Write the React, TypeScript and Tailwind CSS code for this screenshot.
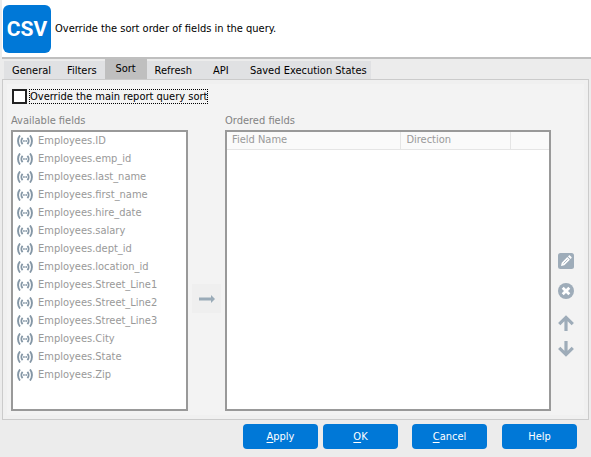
import { useState } from 'react';

const TABS = ['General', 'Filters', 'Sort', 'Refresh', 'API', 'Saved Execution States'];

const FIELDS = [
  'Employees.ID',
  'Employees.emp_id',
  'Employees.last_name',
  'Employees.first_name',
  'Employees.hire_date',
  'Employees.salary',
  'Employees.dept_id',
  'Employees.location_id',
  'Employees.Street_Line1',
  'Employees.Street_Line2',
  'Employees.Street_Line3',
  'Employees.City',
  'Employees.State',
  'Employees.Zip',
];

function CsvLogo() {
  return (
    <div
      className="flex size-12 shrink-0 items-center justify-center rounded-md bg-[#0078d7] font-['Roboto',sans-serif] text-[21px] leading-6 font-bold text-white"
      aria-hidden
    >
      CSV
    </div>
  );
}

function FieldIcon() {
  return (
    <svg
      className="h-3 w-4 shrink-0"
      viewBox="0 0 16 12"
      fill="none"
      stroke="#8496a5"
      strokeWidth="1.9"
      aria-hidden
    >
      <path d="M3 .5C.4 3.5.4 8.500 3 11.500M13 .5c2.600 3 2.600 8 0 11" />
      <path d="M5.600 2.800c-1.600 1.800-1.600 4.600 0 6.400M10.400 2.800c1.600 1.800 1.600 4.600 0 6.400" />
      <path d="M6.300 6h1.300M8.500 6h1.300" strokeWidth="2" />
    </svg>
  );
}

function ArrowRightIcon() {
  return (
    <svg className="h-2 w-4" viewBox="0 0 16 8" fill="#9aabb8" aria-hidden>
      <path d="M0 2.600h12V0l4 4-4 4V5.400H0z" />
    </svg>
  );
}

function EditIcon() {
  return (
    <svg className="size-4" viewBox="0 0 16 16" aria-hidden>
      <rect width="16" height="16" rx="2.500" fill="#9eacb9" />
      <path d="M3 13l.7-3.300 5.600-5.600 2.600 2.600-5.600 5.600zM10 3.400l.9-.9c.3-.3.700-.3 1 0l1.600 1.600c.3.3.3.700 0 1l-.9.9z" fill="#fff" />
      <path d="M5.500 10.500l4.200-4.200" stroke="#9eacb9" strokeWidth=".8" />
    </svg>
  );
}

function RemoveIcon() {
  return (
    <svg className="size-4" viewBox="0 0 16 16" aria-hidden>
      <circle cx="8" cy="8" r="8" fill="#9eacb9" />
      <path d="M4.700 4.700l6.600 6.600M11.300 4.700l-6.600 6.600" stroke="#fff" strokeWidth="2.800" />
    </svg>
  );
}

function ArrowUpIcon({ flipped = false }: { flipped?: boolean }) {
  return (
    <svg
      className={flipped ? 'size-4 rotate-180' : 'size-4'}
      viewBox="0 0 16 16"
      fill="none"
      stroke="#9eacb9"
      strokeWidth="3.200"
      aria-hidden
    >
      <path d="M8 16V2.500M1.200 9.200L8 2.400l6.800 6.800" />
    </svg>
  );
}

function FooterButton({ label, accessKey }: { label: string; accessKey?: string }) {
  return (
    <button
      type="button"
      accessKey={accessKey?.toLowerCase()}
      className="h-[25px] w-[75px] rounded bg-[#0078d7] pt-px text-white hover:bg-[#0069bd]"
    >
      {accessKey ? (
        <>
          <span className="underline underline-offset-2">{accessKey}</span>
          {label.slice(1)}
        </>
      ) : (
        label
      )}
    </button>
  );
}

export default function App() {
  const [tab, setTab] = useState('Sort');
  const [override, setOverride] = useState(false);

  return (
    <div className="flex min-h-screen flex-col bg-[#ececec] pl-[2px] font-['DejaVu_Sans_Condensed','DejaVu_Sans',sans-serif] text-[11px] leading-[18px] text-black">
      <header className="flex h-[59px] items-center gap-1 border-b-2 border-[#bfbfbf] bg-white pl-px">
        <CsvLogo />
        <p>Override the sort order of fields in the query.</p>
      </header>

      <nav className="flex h-5 items-end pl-[2px]" role="tablist">
        {TABS.map((name) => (
          <button
            key={name}
            type="button"
            role="tab"
            aria-selected={name === tab}
            onClick={() => setTab(name)}
            className={
              name === tab
                ? 'h-5 min-w-[42px] bg-[#bfbfbf] px-2 last:pr-1'
                : 'h-[18px] min-w-[42px] bg-[#e0e1e3] px-2 pt-px last:pr-1'
            }
          >
            {name}
          </button>
        ))}
      </nav>

      <main className="mr-[2px] flex flex-1 flex-col border border-[#cbcbcb] bg-[#f0f0f0] p-1">
        <div className="flex flex-1 flex-col bg-[#f3f3f3] px-1 pt-[2px] pb-1">
          <label className="flex h-5 items-center gap-[2px] self-start pl-px">
            <input
              type="checkbox"
              checked={override}
              onChange={(e) => setOverride(e.target.checked)}
              className="size-[15px] appearance-none border-2 border-[#222] bg-white checked:bg-[#0078d7]"
            />
            <span className="h-[15px] border border-dotted border-black leading-[14px]">
              Override the main report query sort
            </span>
          </label>

          <div className="mt-[6px] flex flex-1">
            <section className="flex w-[177px] flex-col text-[#999]">
              <h2 className="h-[18px] text-[#838383]">Available fields</h2>
              <ul className="flex-1 border-2 border-[#999] bg-white pl-1">
                {FIELDS.map((field) => (
                  <li key={field} className="flex h-[18px] items-center gap-[5px]">
                    <FieldIcon />
                    {field}
                  </li>
                ))}
              </ul>
            </section>

            <div className="flex items-center px-1 pt-[74px]">
              <button
                type="button"
                disabled
                aria-label="Add field"
                className="flex size-[29px] items-center justify-center bg-[#efefef]"
              >
                <ArrowRightIcon />
              </button>
            </div>

            <section className="flex flex-1 flex-col">
              <h2 className="h-[18px] text-[#838383]">Ordered fields</h2>
              <div className="flex-1 border-2 border-[#999] bg-white">
                <table className="w-full table-fixed border-collapse text-left text-[#999]">
                  <thead>
                    <tr className="h-[17px] border-b border-[#e5e5e5] bg-[#fafafa] leading-4">
                      <th className="w-[54%] border-r border-[#e5e5e5] pl-[5px] font-normal">Field Name</th>
                      <th className="w-[34%] border-r border-[#e5e5e5] pl-[5px] font-normal">Direction</th>
                      <th aria-label="Options" />
                    </tr>
                  </thead>
                </table>
              </div>
            </section>

            <div className="flex w-[29px] flex-col items-center justify-center pt-[86px]">
              <button type="button" disabled aria-label="Edit" className="mb-[14px]">
                <EditIcon />
              </button>
              <button type="button" disabled aria-label="Remove" className="mb-4">
                <RemoveIcon />
              </button>
              <button type="button" disabled aria-label="Move up" className="mb-[10px]">
                <ArrowUpIcon />
              </button>
              <button type="button" disabled aria-label="Move down">
                <ArrowUpIcon flipped />
              </button>
            </div>
          </div>
        </div>
      </main>

      <footer className="flex justify-end pt-1 pr-[14px] pb-2">
        <div className="flex gap-[5px]">
          <FooterButton label="Apply" accessKey="A" />
          <FooterButton label="OK" accessKey="O" />
        </div>
        <div className="ml-[14px] flex gap-[15px]">
          <FooterButton label="Cancel" accessKey="C" />
          <FooterButton label="Help" />
        </div>
      </footer>
    </div>
  );
}
